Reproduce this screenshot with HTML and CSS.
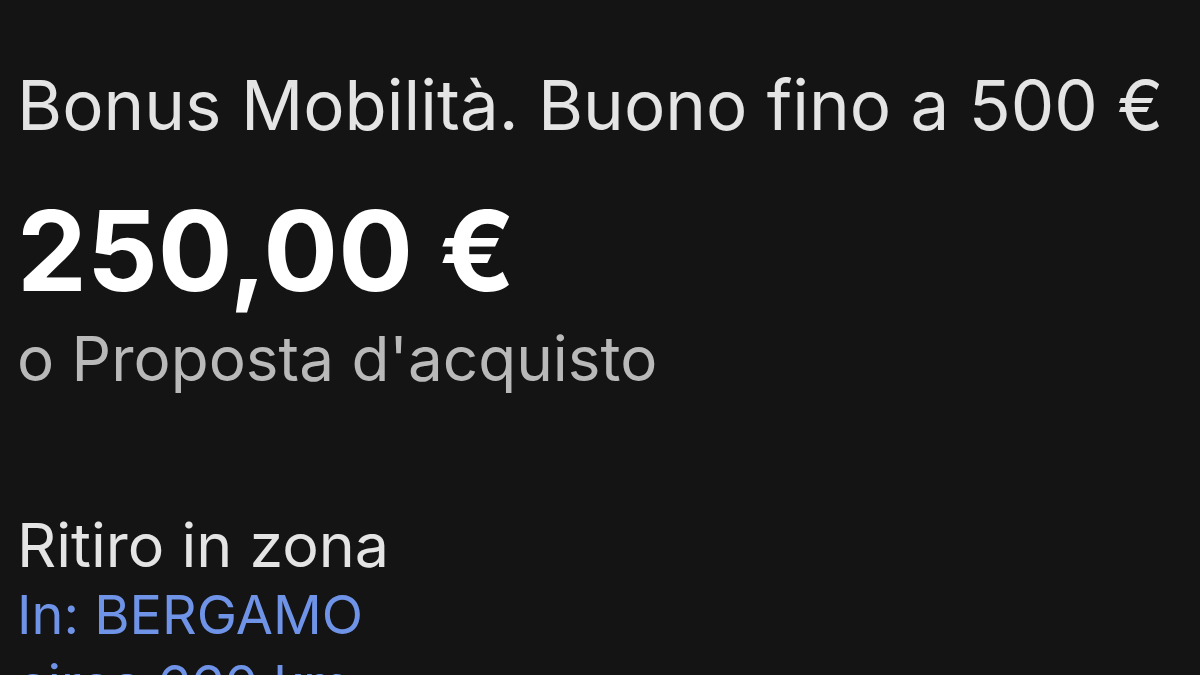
FILE: index.html
```html
<!DOCTYPE html>
<html lang="it">
<head>
<meta charset="utf-8">
<link rel="stylesheet" href="styles.css">
</head>
<body>
<main class="listing">
  <h1 class="title">Bonus Mobilità. Buono fino a 500 €</h1>
  <div class="price">250,00 €</div>
  <div class="offer">o Proposta d'acquisto</div>
  <section class="pickup">
    <div class="pickup-label">Ritiro in zona</div>
    <div class="pickup-loc">In: BERGAMO</div>
    <div class="pickup-loc">circa 660 km</div>
  </section>
</main>
</body>
</html>
```
FILE: styles.css
```css
html, body {
  margin: 0;
  padding: 0;
  background: #141414;
  height: 100%;
  overflow: hidden;
}
body {
  font-family: Inter, Roboto, "Liberation Sans", sans-serif;
}
.listing {
  padding: 64px 0 0 17px;
  display: flex;
  flex-direction: column;
}
.title {
  margin: 0;
  font-weight: 400;
  font-size: 69px;
  line-height: 82px;
  color: #e4e4e4;
}
.price {
  margin-top: 40px;
  font-weight: 700;
  font-size: 111px;
  line-height: 130px;
  color: #ffffff;
}
.offer {
  margin-top: 7px;
  font-size: 62px;
  line-height: 72px;
  color: #b9b9b9;
}
.pickup {
  margin-top: 115px;
  display: flex;
  flex-direction: column;
}
.pickup-label {
  font-size: 61px;
  line-height: 70px;
  color: #e4e4e4;
}
.pickup-loc {
  font-size: 54px;
  line-height: 70px;
  color: #6f93e6;
}
```
